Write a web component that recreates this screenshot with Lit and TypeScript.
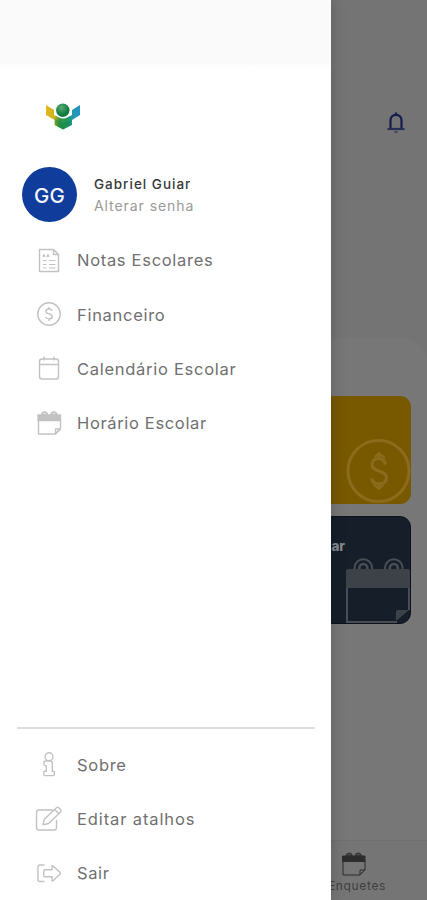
import { LitElement, html, css, svg } from "lit";
import { customElement, property } from "lit/decorators.js";

const icons: Record<string, unknown> = {
  notes: svg`<path d="M3.500 2.500h14l5 5v17h-19zM17.500 2.500v5h5"/><path stroke-width="1.200" d="M7 10l1-2.500L9 10M11 10l1-2.500 1 2.500M7 13.500h3.500M13 13.500h6.500M7 17.500h3.500M13 17.500h6.500M7 21h3.500M13 21h6.500"/>`,
  money: svg`<circle cx="13" cy="13" r="11.200"/><path d="M16 9.700c-.5-1.200-1.500-1.700-3-1.700-1.900 0-3 1-3 2.400 0 3.300 6.200 1.700 6.200 5 0 1.500-1.300 2.500-3.200 2.500-1.700 0-2.900-.7-3.300-2M13 6v2M13 18v2"/>`,
  calendar: svg`<rect x="3.500" y="4" width="19" height="20" rx="2.500"/><path d="M3.500 9.500h19M8 1.500v4M18 1.500v4"/>`,
  schedule: svg`<path d="M5.700 5a3 3 0 0 1 6 0zM14.800 5a3 3 0 0 1 6 0z" fill="currentColor" fill-opacity=".5"/><path d="M2 5h22.500v5.500H2z" fill="currentColor"/><path d="M2.500 10v14h17l5-5v-9"/><path d="M19.500 24v-5h5M20.500 22.500l3-2.500"/>`,
  info: svg`<circle cx="13" cy="5.700" r="3.900"/><path d="M9.300 10h5.400q1.600 0 1.600 1.300v8.900h1q1.100 0 1.100 1.100v2.200q0 1.100-1.100 1.100H8.900q-1.100 0-1.100-1.100v-2.200q0-1.100 1.100-1.100h1.400v-5.600h-1q-1.300 0-1.300-1.100v-2.200q0-1.300 1.300-1.300z"/>`,
  edit: svg`<path d="M17 4H2.800Q.5 4 .5 6.300v15.400Q.5 24 2.800 24h15.400q2.300 0 2.300-2.300V14"/><path d="M7 18.800l1.300-5.600L20.500 1.800q1.200-1 2.300 0l1.800 1.800q1 1.200 0 2.300L12.700 17.500zM18.700 3.500l4.200 4.200"/>`,
  exit: svg`<path d="M8.500 5H4Q2 5 2 7v12.500q0 2 2 2h4.500"/><path d="M9 9.700h7V6.300q0-1.300 1-.4l7 6.400q1 1 0 1.900l-7 6.500q-1 .8-1-.5v-3.400H9q-1.200 0-1.200-1.200v-4.700Q7.800 9.700 9 9.700z"/>`,
};

@customElement("menu-row")
class MenuRow extends LitElement {
  @property() icon = "";
  @property() label = "";
  @property({ type: Number }) spacing = 0.7;

  static styles = css`
    :host { display: flex; align-items: center; height: 54.400px; padding-left: 36px; }
    .icon { width: 26px; height: 27px; margin-right: 15px; color: #c2c2c2; overflow: visible; flex: none; }
    .label { font: 400 16.500px/24px Inter, sans-serif; color: #707070; white-space: nowrap; }
  `;

  render() {
    return html`<svg class="icon" viewBox="0 0 26 27" fill="none" stroke="currentColor" stroke-width="1.400" stroke-linejoin="round">${icons[this.icon]}</svg>
      <span class="label" style="letter-spacing:${this.spacing}px">${this.label}</span>`;
  }
}

@customElement("app-root")
class AppRoot extends LitElement {
  static styles = css`
    :host { display: block; position: relative; width: 427px; height: 900px; overflow: hidden; font-family: Inter, sans-serif; background: #747474; }
    * { box-sizing: border-box; }
    .page { height: 900px; display: flex; flex-direction: column; align-items: flex-end; }
    .top { height: 338px; width: 100%; display: flex; justify-content: flex-end; padding: 111px 20px 0 0; }
    .bell { width: 22px; height: 24px; }
    .sheet { width: 100%; height: 502px; background: #777; border-radius: 0 26px 0 0; padding: 58px 16px 0 0; display: flex; flex-direction: column; align-items: flex-end; gap: 12px; }
    .card { width: 190px; height: 108px; border-radius: 11px; overflow: hidden; display: flex; justify-content: flex-end; align-items: flex-end; }
    .gold { background: #785900; }
    .navy { background: #151e29; border: 1px solid #0c121b; justify-content: space-between; }
    .word { align-self: flex-start; width: 125px; margin-top: 20px; text-align: right; font: 800 13.500px/18px Inter, sans-serif; color: #85888c; }
    .art { display: block; flex: none; }
    .nav { width: 100%; height: 60px; border-top: 1px solid #707070; background: #757575; padding: 10px 0 0 299px; }
    .tab { width: 116px; display: flex; flex-direction: column; align-items: center; }
    .tabicon { width: 27px; height: 27px; color: #2c2c2c; margin-right: 8px; }
    .tabname { font-size: 12px; line-height: 14px; color: #404040; letter-spacing: .65px; margin-top: 1px; }
    .drawer { position: absolute; left: 0; top: 0; width: 331px; height: 900px; background: #fff; display: flex; flex-direction: column; box-shadow: 0 0 14px rgba(0,0,0,.22); }
    .status { height: 68px; background: linear-gradient(#fafafa 62px, #fff); }
    .logo { width: 36px; height: 28px; margin: 34px 0 0 45px; }
    .user { height: 64px; margin: 32px 0 7px 22px; display: flex; align-items: center; }
    .avatar { width: 55px; height: 55px; border-radius: 50%; background: #103d9b; color: #f4f7ff; display: grid; place-items: center; font-size: 20.500px; font-weight: 500; letter-spacing: .1px; padding-top: 2px; }
    .who { margin-left: 17px; padding-top: 2px; }
    .name { font-size: 13.500px; line-height: 21px; font-weight: 500; color: #383838; letter-spacing: 1px; }
    .pass { font-size: 14px; line-height: 22px; color: #999; letter-spacing: .93px; }
    .space { flex: 1; }
    .line { height: 2px; margin: 0 16px 8px 17px; background: #dedede; }
    .foot { margin-bottom: -.600px; }
  `;

  render() {
    return html`
      <div class="page">
        <div class="top">
          <svg class="bell" viewBox="0 0 22 24" fill="none" stroke="#151d4c" stroke-width="2.200"><path d="M5.500 18v-8.500C5.500 6 7.800 3.800 11 3.800s5.500 2.200 5.500 5.700V18"/><path d="M2.500 18h17" stroke="#282f54"/><path d="M11 1.500v2"/><path d="M9 20.500h4l-2 1.500z" stroke-width="1" fill="#444a68" stroke="#444a68"/></svg>
        </div>
        <div class="sheet">
          <div class="card gold">
            <svg class="art" width="65" height="66" viewBox="0 0 65 66" fill="none" stroke="#8b6c1c"><circle cx="32.500" cy="33" r="30.500" stroke-width="3"/><path d="M39.500 26.500c-1-4-3.300-6-6.500-6-4.300 0-7 2.500-7 6 0 8 14.500 5.500 14.500 13 0 4-3 6.500-7.500 6.500-4 0-6.500-2-7.500-5.500M33 15.500v5M33 46v5" stroke-width="3.200"/><path d="M28.500 19l4.500-4 6 5M27.500 46.500l5.500 4.500 4.500-4" stroke-width="2"/></svg>
          </div>
          <div class="card navy">
            <span class="word">Escolar</span>
            <svg class="art" width="65" height="66" viewBox="0 0 65 66"><g fill="none" stroke="#494e54" stroke-width="2"><path d="M9.500 13v-2a8.800 8.800 0 0 1 17.600 0v2M40 13v-2a8.800 8.800 0 0 1 17.600 0v2"/><path d="M14.300 13v-2a4 4 0 0 1 8 0v2M44.800 13v-2a4 4 0 0 1 8 0v2" stroke-width="2.600"/><path d="M2 18v47h50M64 18v35"/></g><path d="M1 14q0-2 2-2h60q2 0 2 2v17H1zM51 64V55q0-2 2-2h11z" fill="#3d4249"/></svg>
          </div>
        </div>
        <div class="nav"><div class="tab">
          <svg class="tabicon" viewBox="0 0 26 27" fill="none" stroke="currentColor" stroke-width="1">${icons.schedule}</svg>
          <span class="tabname">Enquetes</span>
        </div></div>
      </div>
      <div class="drawer">
        <div class="status"></div>
        <svg class="logo" viewBox="0 0 36 28">
          <defs>
            <linearGradient id="wings"><stop offset="0" stop-color="#e8b51b"/><stop offset=".24" stop-color="#c9b720"/><stop offset=".4" stop-color="#2f9545"/><stop offset=".62" stop-color="#23995c"/><stop offset=".8" stop-color="#2499b0"/><stop offset="1" stop-color="#2593c8"/></linearGradient>
            <radialGradient id="ball" cx=".4" cy=".3"><stop stop-color="#5aad70"/><stop offset="1" stop-color="#137c43"/></radialGradient>
          </defs>
          <path d="M1 3l8 5v5l4 2q5 3 10 0l4-2V8l8-5v10l-8 5v5l-9 4.500L9.500 23v-5L1 13z" fill="url(#wings)"/>
          <path d="M10 17l8 4 8-4v6l-8 4.500-8-4.500z" fill="#128348" opacity=".4"/>
          <circle cx="17.800" cy="8.300" r="6.700" fill="url(#ball)"/>
        </svg>
        <div class="user">
          <div class="avatar">GG</div>
          <div class="who"><div class="name">Gabriel Guiar</div><div class="pass">Alterar senha</div></div>
        </div>
        <menu-row icon="notes" label="Notas Escolares" spacing="0.700"></menu-row>
        <menu-row icon="money" label="Financeiro" spacing="0.700"></menu-row>
        <menu-row icon="calendar" label="Calendário Escolar" spacing="0.720"></menu-row>
        <menu-row icon="schedule" label="Horário Escolar" spacing="0.650"></menu-row>
        <div class="space"></div>
        <div class="line"></div>
        <menu-row icon="info" label="Sobre" spacing="0.700"></menu-row>
        <menu-row icon="edit" label="Editar atalhos" spacing="0.880"></menu-row>
        <menu-row class="foot" icon="exit" label="Sair" spacing="0.600"></menu-row>
      </div>`;
  }
}
